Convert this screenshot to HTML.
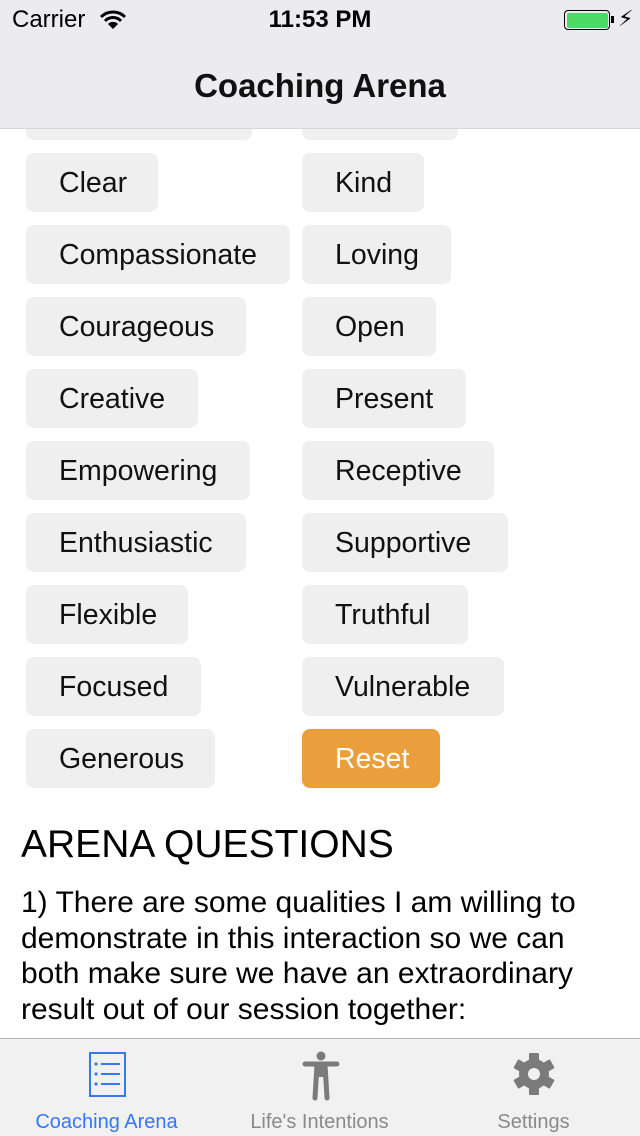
<!DOCTYPE html>
<html><head><meta charset="utf-8"><style>
*{margin:0;padding:0;box-sizing:border-box}
body{width:640px;height:1136px;overflow:hidden;background:#fff;font-family:"Liberation Sans",sans-serif;position:relative;color:#000}
.b{position:absolute;height:59px;background:#efefef;border-radius:8px;font-size:28.5px;line-height:61px;padding-left:33px;color:#111}
.nav{position:absolute;left:0;top:0;width:640px;height:129px;background:#ebebf0;border-bottom:1px solid #d6d6d6;z-index:2}
.tab{position:absolute;left:0;top:1038px;width:640px;height:98px;background:#f1f1f1;border-top:1px solid #b3b3b3}
.tl{position:absolute;top:1111px;font-size:20px;color:#8a8a8a;text-align:center;width:213px}
</style></head><body>
<div class="nav">
<div style="position:absolute;left:12px;top:6px;font-size:24px">Carrier</div>
<svg style="position:absolute;left:100px;top:10px" width="26" height="20" viewBox="0 0 26 20"><path d="M1 7 A17 17 0 0 1 25 7" stroke="#000" stroke-width="3" fill="none"/><path d="M5 11 A11 11 0 0 1 21 11" stroke="#000" stroke-width="3" fill="none"/><path d="M13 19 L8 14 A7 7 0 0 1 18 14Z" fill="#000"/></svg>
<div style="position:absolute;left:0;width:640px;top:6px;text-align:center;font-size:24px;font-weight:bold">11:53 PM</div>
<div style="position:absolute;left:564px;top:10px;width:46px;height:20px;border:1.5px solid #000;border-radius:4px;padding:1.5px"><div style="background:#4cd964;width:100%;height:100%;border-radius:2px"></div></div>
<div style="position:absolute;left:611px;top:16px;width:3px;height:7px;background:#000"></div>
<div style="position:absolute;left:618px;top:6px;font-size:22px">⚡︎</div>
<div style="position:absolute;left:0;width:640px;top:67px;text-align:center;font-size:33px;font-weight:bold;color:#111">Coaching Arena</div>
</div>
<div class="b" style="left:26px;top:81px;width:226px"></div>
<div class="b" style="left:302px;top:81px;width:156px"></div>
<div class="b" style="left:26px;top:153px;width:132px">Clear</div>
<div class="b" style="left:302px;top:153px;width:122px">Kind</div>
<div class="b" style="left:26px;top:225px;width:264px">Compassionate</div>
<div class="b" style="left:302px;top:225px;width:149px">Loving</div>
<div class="b" style="left:26px;top:297px;width:220px">Courageous</div>
<div class="b" style="left:302px;top:297px;width:134px">Open</div>
<div class="b" style="left:26px;top:369px;width:172px">Creative</div>
<div class="b" style="left:302px;top:369px;width:164px">Present</div>
<div class="b" style="left:26px;top:441px;width:224px">Empowering</div>
<div class="b" style="left:302px;top:441px;width:192px">Receptive</div>
<div class="b" style="left:26px;top:513px;width:220px">Enthusiastic</div>
<div class="b" style="left:302px;top:513px;width:206px">Supportive</div>
<div class="b" style="left:26px;top:585px;width:162px">Flexible</div>
<div class="b" style="left:302px;top:585px;width:166px">Truthful</div>
<div class="b" style="left:26px;top:657px;width:175px">Focused</div>
<div class="b" style="left:302px;top:657px;width:202px">Vulnerable</div>
<div class="b" style="left:26px;top:729px;width:189px">Generous</div>
<div class="b" style="left:302px;top:729px;width:138px;background:#eb9f3c;color:#fff">Reset</div>
<div style="position:absolute;left:21px;top:822px;font-size:39px;line-height:46px">ARENA QUESTIONS</div>
<div style="position:absolute;left:21px;top:885px;width:600px;font-size:30px;line-height:35.5px">1) There are some qualities I am willing to demonstrate in this interaction so we can both make sure we have an extraordinary result out of our session together:</div>
<div class="tab">
<svg style="position:absolute;left:89px;top:13px" width="37" height="45" viewBox="0 0 37 45"><rect x="1" y="1" width="35" height="43" fill="none" stroke="#3478f6" stroke-width="2"/><g fill="#3478f6"><circle cx="7" cy="12" r="1.6"/><circle cx="7" cy="22" r="1.6"/><circle cx="7" cy="32" r="1.6"/><rect x="12" y="11" width="19" height="2"/><rect x="12" y="21" width="19" height="2"/><rect x="12" y="31" width="19" height="2"/></g></svg>
<svg style="position:absolute;left:302px;top:12px" width="38" height="50" viewBox="0 0 38 50"><circle cx="19" cy="5" r="4.5" fill="#7b7b7b"/><path d="M3 13 H35" stroke="#7b7b7b" stroke-width="5" stroke-linecap="round"/><path d="M15 13 L13 47 M23 13 L25 47" stroke="#7b7b7b" stroke-width="5" stroke-linecap="round"/><rect x="14" y="12" width="10" height="14" fill="#7b7b7b"/></svg>
<svg style="position:absolute;left:513px;top:13px" width="42" height="44" viewBox="-21 -22 42 44"><g fill="#7b7b7b"><circle r="15"/><g id="t"><rect x="-5" y="-21" width="10" height="10" rx="1"/></g><use href="#t" transform="rotate(60)"/><use href="#t" transform="rotate(120)"/><use href="#t" transform="rotate(180)"/><use href="#t" transform="rotate(240)"/><use href="#t" transform="rotate(300)"/></g><circle r="6" fill="#f1f1f1"/></svg>
</div>
<div class="tl" style="left:0;color:#3478f6">Coaching Arena</div>
<div class="tl" style="left:213px">Life's Intentions</div>
<div class="tl" style="left:427px">Settings</div>
</body></html>
